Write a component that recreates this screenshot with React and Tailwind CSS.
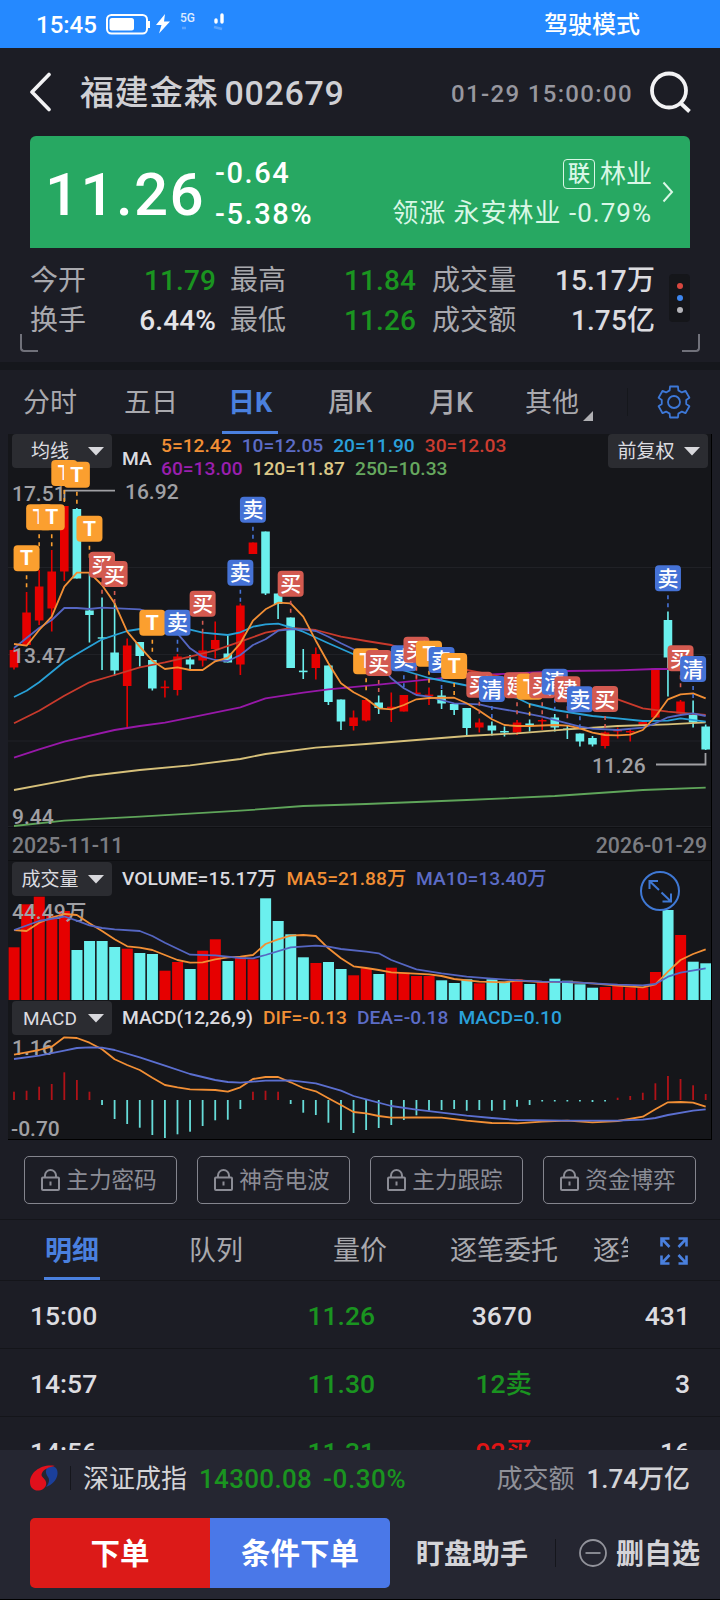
import React from 'react'

const UP = '#e60000'
const DOWN = '#6bf0ee'

const STEP = 12.576
const barX = (i) => 14 + i * STEP

// wick top, body top, body bottom, wick bottom, rising
const candles = [
  [648, 650, 667.5, 669.5, 1], [592, 612.5, 645, 645, 1], [570, 586.5, 620.5, 625, 1], [550, 571.5, 608.5, 631.5, 1],
  [506, 506, 571.5, 581, 1], [508, 509, 578.5, 578.5, 0], [573, 610.5, 615, 642.5, 0], [597.5, 637.3, 638.7, 670, 0],
  [603, 652.5, 670.5, 675.5, 0], [638.5, 645.5, 686, 727.5, 1], [642, 642, 656, 666.5, 0], [660, 660, 688.5, 690.5, 0],
  [680.5, 686.6, 688.2, 697.5, 1], [654, 656.5, 690, 695.5, 1], [655, 659.5, 664.5, 669.5, 0], [633, 650.5, 660.5, 666.5, 1],
  [621.5, 640, 649, 658.5, 1], [636, 653.5, 662.5, 662.5, 0], [603.5, 605.5, 664.5, 675, 1], [542.5, 542.5, 554, 554, 1],
  [531.5, 531.5, 593.5, 595, 0], [593.5, 593.5, 604, 619, 0], [617.5, 617.5, 668, 668, 0], [649, 670.6, 672.2, 679, 0],
  [647.5, 654, 668, 679.5, 1], [665.5, 665.5, 702, 705, 0], [699.5, 699.5, 721.5, 730, 0], [710.5, 717.5, 726, 730.5, 1],
  [698, 700, 720.5, 721.5, 1], [695.5, 702.5, 708, 714, 0], [692.5, 706.7, 708.3, 722, 1], [695, 695, 711.5, 711.5, 1],
  [675, 692.6, 694.2, 695, 1], [687.5, 694.6, 696.2, 705, 1], [690, 695.5, 703.5, 709, 0], [704, 704, 710, 715, 0],
  [708, 708, 728, 735, 0], [718.5, 722.5, 727.5, 732.5, 1], [721.5, 725.5, 730.5, 735.5, 0], [726.5, 731, 732.5, 736.5, 0],
  [720, 722.5, 732.5, 735, 1], [719.5, 723.5, 725, 731.5, 0], [718.5, 720, 721.5, 730, 1], [714, 717.5, 727.5, 731.5, 0],
  [725, 728.5, 730, 739, 0], [733.5, 733.5, 741.5, 746.5, 0], [736, 738, 744.5, 746.5, 0], [731.5, 732.5, 746, 748.5, 1],
  [727.5, 729.5, 731.5, 738.5, 1], [728.5, 731, 732.5, 741.5, 1], [722, 722, 726, 726, 1], [668.5, 668.5, 717.5, 717.5, 1],
  [611.5, 620, 657.5, 696.5, 0], [700, 701.5, 713.5, 713.5, 1], [700.5, 715, 722.5, 727.5, 0], [724.5, 726.5, 749.5, 750, 0],
]

// every line is a list of [bar index, y]
const maLines = [
  { color: '#5fa55a', pts: [[0, 826], [4, 820.7], [10, 816.7], [18, 810.7], [23, 806], [28, 804], [36, 800], [43, 796], [50, 790], [55, 787.7]] },
  { color: '#d6c07a', pts: [[0, 790], [4, 780.7], [6, 776], [10, 770], [14, 765.3], [18, 759], [20, 754], [24, 747.7], [28, 744], [32, 740], [36, 736], [40, 733.3], [44, 729.3], [48, 726], [52, 724.3], [55, 722.3]] },
  { color: '#9718a8', pts: [[0, 757.7], [2, 749.3], [4, 741.7], [8, 730], [10, 726], [12, 722.7], [14, 717.7], [18, 707.3], [20, 698.3], [23, 692.7], [25, 689.3], [29, 684.7], [33, 679.3], [37, 675], [44, 671], [48, 670.3], [51, 669], [55, 669]] },
  { color: '#c93a2c', pts: [[0, 723.3], [2, 710.7], [4, 695.7], [6, 682.3], [8, 675], [10, 667.3], [12, 662.3], [14, 656.7], [16, 650.3], [18, 641.7], [20, 632.7], [22, 628], [24, 630], [26, 636.7], [28, 641], [30, 645], [34, 660], [36, 670], [38, 675], [44, 690], [48, 699.3], [50, 708.3], [52, 711.7], [55, 715]] },
  { color: '#28a0d6', pts: [[0, 697], [1, 690.7], [2, 682.3], [4, 661.7], [5, 654], [7, 639.3], [9, 631], [10, 629], [14, 629.7], [15, 632.7], [17, 635], [18, 632.3], [19, 626.7], [20, 624.3], [21, 623.7], [22, 627.3], [23, 631.7], [25, 643.3], [27, 654.3], [29, 663], [33, 678], [37, 688], [40, 698], [41, 704], [43, 710], [46, 716], [48, 718.3], [50, 721], [52, 720.7], [53, 718.3], [55, 721.7]] },
  { color: '#5566c2', pts: [[0, 648.3], [1, 638], [2, 628], [3, 620], [4, 608], [5, 608], [6, 609], [7, 607.7], [10, 609.3], [12, 617], [13, 633.3], [14, 648.3], [15, 656.7], [16, 660], [17, 661], [18, 655], [19, 645], [20, 639.3], [21, 630.7], [22, 629.3], [23, 629.3], [24, 631], [25, 636.7], [26, 643.3], [27, 649.3], [29, 663], [30, 678.3], [31, 688.3], [32, 695], [33, 696.7], [34, 700], [35, 703.3], [37, 704.3], [38, 707.3], [40, 711.7], [42, 716.7], [44, 723.3], [45, 726.7], [46, 728.7], [48, 730], [50, 727.7], [51, 723.3], [52, 717.3], [53, 715], [54, 713.3], [55, 716]] },
  { color: '#f28f35', pts: [[0, 644], [1, 645.7], [2, 630], [3, 616.7], [4, 586.7], [5, 572.7], [6, 572.7], [7, 585], [8, 603.3], [9, 631.7], [10, 646.7], [11, 660.7], [12, 669], [13, 667.3], [14, 670], [15, 670], [16, 661.3], [17, 657.7], [18, 643.3], [19, 620.7], [20, 609.3], [21, 602.7], [22, 603.3], [23, 616.7], [24, 640.7], [25, 663.3], [26, 683.3], [27, 692.3], [28, 698.7], [29, 708.3], [30, 709.3], [31, 705], [32, 699.3], [33, 698], [35, 697.7], [36, 703.3], [37, 710.7], [38, 719.3], [39, 725], [40, 726], [41, 726], [43, 725], [44, 725.7], [45, 728.3], [46, 732.7], [47, 735], [48, 735.3], [49, 734.7], [50, 730], [51, 716.7], [52, 699.3], [53, 694.3], [54, 693.3], [55, 698.3]] },
]

// bar index, center y, label
const marks = [
  [1, 558.3, 'T'], [2, 517.3, 'T'], [3, 517.3, 'T'], [4, 473, 'T'], [5, 474.7, 'T'], [6, 528.7, 'T'],
  [7, 564.7, '买'], [8, 574, '买'], [11, 622.7, 'T'], [13, 622.7, '卖'], [15, 603.7, '买'], [18, 572.7, '卖'],
  [19, 509.7, '卖'], [22, 583.7, '买'], [28, 661.3, 'T'], [29, 663, '买'], [31, 658.3, '卖'], [32, 649.7, '买'],
  [33, 653.7, 'T'], [34, 660, '卖'], [35, 666, 'T'], [37, 684.7, '买'], [38, 689, '清'], [40, 685.3, '建'],
  [41, 686.7, 'T'], [42, 685.3, '买'], [43, 681.7, '清'], [44, 689.3, '建'], [45, 699.3, '卖'], [47, 699, '买'],
  [52, 578.3, '卖'], [53, 658.3, '买'], [54, 669, '清'],
]

const markColor = { T: '#fb9f2f', 买: '#d35a50', 建: '#d35a50', 卖: '#4572d6', 清: '#4572d6' }

// volume: [top, rising]
const volumes = [
  [947.3, 1], [904.3, 1], [896.7, 1], [915.7, 1], [911, 1], [950, 0], [941, 0], [941, 0], [947, 0], [948.7, 1],
  [953, 0], [954, 0], [970.7, 1], [962, 1], [969, 0], [950.7, 1], [939.3, 1], [961, 0], [957.3, 1], [959.3, 1],
  [898.3, 0], [921, 0], [934.3, 0], [957.3, 0], [963, 1], [962, 0], [969, 0], [975.3, 1], [968.3, 1], [974, 0],
  [967.7, 1], [972.7, 1], [976, 1], [976, 1], [980.3, 0], [983, 0], [979.3, 0], [983.3, 1], [979.3, 0], [981.7, 0],
  [979.3, 1], [984, 0], [982.3, 1], [978.7, 0], [980.7, 0], [984.3, 0], [987.7, 0], [987, 1], [986, 1], [987.3, 1],
  [987.3, 1], [972, 1], [910, 0], [935, 1], [961.7, 0], [963.3, 0],
]

const volLines = [
  { color: '#f28f35', pts: [[0, 930], [1, 931], [2, 922.7], [3, 917.7], [4, 914], [5, 915], [6, 923.3], [7, 931], [8, 939.3], [9, 946.3], [10, 947.7], [11, 950], [12, 955], [13, 960], [14, 962.7], [15, 962.3], [16, 959.3], [17, 957.3], [18, 956.7], [19, 955], [20, 944], [21, 939.3], [22, 935.7], [23, 935], [24, 936], [25, 948.3], [26, 958.3], [27, 966.3], [28, 968], [29, 970], [30, 972.3], [33, 974.3], [34, 976], [35, 979], [37, 981.7], [39, 982.3], [40, 980.5], [42, 982], [44, 982], [46, 983.3], [48, 985.7], [50, 987.3], [51, 984.3], [52, 971.7], [53, 960], [54, 954], [55, 949.3]] },
  { color: '#5566c2', pts: [[0, 930], [2, 921], [4, 916.5], [5, 920.7], [6, 925.3], [7, 928], [8, 929.3], [10, 931], [11, 936], [12, 942.7], [14, 954.7], [16, 955.3], [18, 958], [19, 958.3], [20, 955], [22, 947.3], [24, 945.7], [25, 946.7], [26, 949], [28, 951.7], [29, 953.3], [30, 960], [32, 969.3], [34, 973.3], [36, 976.7], [38, 978.7], [40, 980.3], [42, 981.7], [44, 982], [46, 983.3], [48, 984.7], [50, 985.3], [51, 984], [52, 976.7], [53, 972.7], [55, 968.3]] },
]

const macdBars = [
  1091.7, 1090.7, 1086.7, 1084, 1072.3, 1080, 1091.7, 1105, 1119, 1124, 1127.7, 1135, 1138, 1134.3, 1131.7, 1126,
  1120.3, 1119.7, 1109, 1091.7, 1090.7, 1091.7, 1104, 1112.7, 1115, 1122.7, 1130, 1133, 1130, 1128, 1125, 1120,
  1115.3, 1110.7, 1110, 1109, 1110.7, 1110, 1110.7, 1110, 1106.7, 1105, 1101.5, 1101.5, 1101.5, 1101.5, 1102, 1101.5,
  1097.7, 1096, 1092.7, 1083.3, 1076, 1079, 1085.3, 1094,
]

const macdLines = [
  { color: '#f28f35', pts: [[0, 1054.7], [1, 1052.3], [2, 1050], [3, 1046.7], [4, 1037.3], [5, 1038], [6, 1042.7], [7, 1049.3], [8, 1059.3], [9, 1065], [10, 1070], [11, 1077.7], [12, 1085], [13, 1087.3], [14, 1089.3], [16, 1090], [17, 1091.7], [18, 1087.3], [19, 1079], [20, 1077], [21, 1077], [22, 1082.3], [23, 1088], [24, 1091.3], [25, 1098.3], [26, 1105], [27, 1112], [28, 1113.3], [29, 1116], [30, 1117.7], [32, 1117.3], [34, 1117.7], [36, 1120.7], [38, 1123], [40, 1123.3], [42, 1121.7], [44, 1120.7], [46, 1122.3], [48, 1121], [50, 1116.7], [51, 1109.3], [52, 1102.3], [53, 1102], [54, 1102.7], [55, 1106.7]] },
  { color: '#5b6fd0', pts: [[0, 1059], [2, 1055.7], [4, 1050.7], [5, 1048], [6, 1047.3], [7, 1047.7], [8, 1050], [10, 1057.3], [12, 1065.7], [14, 1074], [16, 1080], [17, 1082], [18, 1082.7], [20, 1080.7], [22, 1080.3], [24, 1083.3], [26, 1090.7], [27, 1096], [28, 1099.3], [30, 1106], [32, 1109.7], [34, 1112.7], [36, 1115.7], [38, 1118], [40, 1120], [44, 1120.7], [48, 1120.7], [50, 1119.7], [51, 1118], [52, 1115], [54, 1110.7], [55, 1109.3]] },
]

function Lines({ data }) {
  return data.map((l) => (
    <polyline
      key={l.color}
      points={l.pts.map(([i, y]) => `${barX(i)},${y}`).join(' ')}
      fill="none"
      stroke={l.color}
      strokeWidth="1.8"
      strokeLinejoin="round"
    />
  ))
}

function Select({ label }) {
  return (
    <div className="flex h-[34px] w-[100px] items-center justify-between rounded bg-[#2b2c31] pr-2 text-[19px] font-normal text-[#dcdce0]">
      <span className="flex-1 pt-px text-center">{label}</span>
      <svg width="16" height="9" viewBox="0 0 16 9" className="shrink-0">
        <path d="M0 0H16L8 8.5Z" fill="#d8d8dc" />
      </svg>
    </div>
  )
}

function StatusBar() {
  return (
    <div className="flex h-12 items-center bg-[#2589ff] pl-[36px] text-[24px] font-medium text-white">
      <span className="w-[70px] pt-[2px]">15:45</span>
      <svg width="120" height="48" viewBox="106 0 120 48">
        <rect x="107" y="15" width="40" height="18.5" rx="4.5" fill="none" stroke="#fff" strokeWidth="2" />
        <rect x="109.5" y="18" width="24.5" height="12.5" rx="2.5" fill="#fff" />
        <path d="M149 21v7" stroke="#fff" strokeWidth="2" />
        <path d="M165 14L156 25h5.5L159 33.5l11-12h-6z" fill="#fff" />
        <text x="180" y="21.500" fontSize="12" fill="#dcebff">5G</text>
        <path d="M216 20v2M222 15v7" stroke="#fff" strokeWidth="3.4" strokeLinecap="round" />
        <path d="M182 28h4M214 27l8 2" stroke="#8fc0ff" strokeWidth="2.5" opacity="0.5" />
      </svg>
      <span className="ml-auto mr-[80px] pt-px text-[24px]">驾驶模式</span>
    </div>
  )
}

function Header() {
  return (
    <div className="flex h-[88px] items-center pl-7 pr-[28px]">
      <svg width="24" height="40" viewBox="0 0 24 40" fill="none" stroke="#f2f2f4" strokeWidth="3.6">
        <path d="M21 2.500L4 20L21 37.500" strokeLinecap="round" strokeLinejoin="round" />
      </svg>
      <h1 className="ml-[28px] flex items-center gap-[6px] pt-[2px] text-[34px] text-[#d0d0d4]">
        <span className="tracking-[0.6px]">福建金森</span>
        <span className="tracking-[0.7px]">002679</span>
      </h1>
      <span className="ml-auto pt-[3px] text-[24px] tracking-[1.35px] text-[#97979f]">01-29 15:00:00</span>
      <svg width="44" height="44" viewBox="0 0 44 44" className="ml-[15px]" fill="none" stroke="#f2f2f4" strokeWidth="3.8">
        <circle cx="21" cy="20.500" r="17" />
        <path d="M32.500 33L41.500 41.500" />
      </svg>
    </div>
  )
}

function PriceCard() {
  return (
    <div className="mx-[30px] flex h-[112px] items-center rounded-t-md bg-[#27a862] pl-[15px] pr-4 text-white">
      <span className="mt-[5px] w-[170px] text-[60px] tracking-[1.4px]">11.26</span>
      <div className="flex flex-col gap-3 pt-[3px] text-[29px] tracking-[1.6px]">
        <span>-0.64</span>
        <span>-5.38%</span>
      </div>
      <div className="ml-auto flex flex-col items-end gap-[11px] text-[26px] text-[#d9f7e6]">
        <div className="flex items-center gap-[5px]">
          <span className="flex h-[30px] w-8 items-center justify-center rounded border border-[#d9f7e6] text-[22px]">联</span>
          <span className="font-normal">林业</span>
        </div>
        <span className="font-normal tracking-[1px]">领涨 永安林业 -0.79%</span>
      </div>
      <svg width="12" height="22" viewBox="0 0 12 22" className="ml-[10px]" fill="none" stroke="#d9f7e6" strokeWidth="2">
        <path d="M1.500 1.500L10 11L1.500 20.500" />
      </svg>
    </div>
  )
}

const stats = [
  ['今开', '11.79', '最高', '11.84', '成交量', '15.17万'],
  ['换手', '6.44%', '最低', '11.26', '成交额', '1.75亿'],
]

function Stats() {
  return (
    <div className="flex h-[114px] flex-col">
      <div className="flex pl-[30px] pt-[13px]">
        <div className="flex w-[625px] flex-col text-[28px] tracking-[0.1px]">
          {stats.map((r, i) => (
            <div key={r[0]} className="flex h-10 items-center text-[#a9a9ae]">
              <span className="w-[70px] font-normal">{r[0]}</span>
              <span className={i === 0 ? 'w-[116px] text-right text-[#1a9420]' : 'w-[116px] text-right text-[#e4e4e8]'}>{r[1]}</span>
              <span className="ml-[14px] w-[80px] font-normal">{r[2]}</span>
              <span className="w-[106px] text-right text-[#1a9420]">{r[3]}</span>
              <span className="ml-[16px] w-[100px] font-normal">{r[4]}</span>
              <span className="flex-1 text-right text-[#dcdce0]">{r[5]}</span>
            </div>
          ))}
        </div>
        <div className="ml-[14px] mt-[13px] flex h-12 w-[21px] flex-col items-center justify-center gap-[6px] rounded-sm bg-[#15161a]">
          <i className="size-[6px] rounded-full bg-[#d8473f]" />
          <i className="size-[6px] rounded-full bg-[#3d86ee]" />
          <i className="size-[6px] rounded-full bg-[#b4b4b8]" />
        </div>
      </div>
      <div className="-mt-[7px] flex justify-between px-5">
        <span className="h-[18px] w-[18px] rounded-bl border-b-2 border-l-2 border-[#70717a]" />
        <span className="h-[18px] w-[18px] rounded-br border-b-2 border-r-2 border-[#70717a]" />
      </div>
    </div>
  )
}

// six-toothed outline around (17, 17)
function gearPath() {
  const pts = []
  for (let i = 0; i < 6; i++) {
    const base = (i * Math.PI) / 3 - Math.PI / 2
    ;[[-0.36, 12.4], [-0.25, 16], [0.25, 16], [0.36, 12.4]].forEach(([d, r]) => {
      pts.push(`${(17 + r * Math.cos(base + d)).toFixed(2)},${(17 + r * Math.sin(base + d)).toFixed(2)}`)
    })
  }
  return `M${pts.join('L')}Z`
}

function PeriodTabs() {
  return (
    <div className="box-content flex h-[64px] items-center border-t-8 border-[#15171c] pl-[23px] text-[27px] font-normal text-[#a9a9ae]">
      <span className="w-[101px] pt-[2px]">分时</span>
      <span className="w-[98px] pt-[2px]">五日</span>
      <span className="flex h-full w-[56px] items-center justify-center border-b-[3px] border-[#4a80de] pt-[5px] font-bold text-[#4a80de]">日K</span>
      <span className="ml-[50px] w-[101px] pt-[2px] font-medium">周K</span>
      <span className="w-[96px] pt-[2px] font-medium">月K</span>
      <span className="pt-[2px]">其他</span>
      <svg width="10" height="10" viewBox="0 0 10 10" className="ml-[4px] mt-7">
        <path d="M10 0V10H0Z" fill="#b0b0b4" />
      </svg>
      <span className="ml-[34px] h-7 w-px bg-[#15171c]" />
      <svg width="34" height="34" viewBox="0 0 34 34" className="ml-[29px]" fill="none" stroke="#3d78d8" strokeWidth="1.8" strokeLinejoin="round">
        <path d={gearPath()} />
        <circle cx="17" cy="17" r="6" />
      </svg>
    </div>
  )
}

function PriceChart() {
  return (
    <div className="grid">
      <div className="col-start-1 row-start-1 flex items-start pl-1 pr-[3px] text-[19.200px]">
        <Select label="均线" />
        <span className="ml-[10px] mt-[15px] w-[39px] text-[#dcdce0]">MA</span>
        <div className="mt-[2px] flex flex-col gap-[4px]">
          <div className="flex gap-[10px]">
            <span className="text-[#f28f35]">5=12.42</span>
            <span className="text-[#5c6cc6]">10=12.05</span>
            <span className="text-[#2aa0da]">20=11.90</span>
            <span className="text-[#cc3c30]">30=12.03</span>
          </div>
          <div className="flex gap-[10px]">
            <span className="text-[#9a1fae]">60=13.00</span>
            <span className="text-[#dcc888]">120=11.87</span>
            <span className="text-[#66a85f]">250=10.33</span>
          </div>
        </div>
        <div className="ml-auto">
          <Select label="前复权" />
        </div>
      </div>
      <svg className="col-start-1 row-start-1" width="703" height="393" viewBox="8 434 703 393">
        <path d="M8 567.500H711M8 654.500H711M8 741H711M8 826.500H711" stroke="#202126" />
        {candles.map(([h, t, b, l, up], i) => (
          <g key={i} fill={up ? UP : DOWN}>
            <rect x={barX(i) - 0.8} y={h} width="1.6" height={l - h} />
            <rect x={barX(i) - 4.3} y={t} width="8.6" height={b - t} />
          </g>
        ))}
        <Lines data={maLines} />
        <g fill="#a0a0a4" fontSize="21">
          <text x="12" y="500.500">17.51</text>
          <text x="12" y="662.500">13.47</text>
          <text x="12" y="823.500">9.44</text>
          <text x="125" y="498.500">16.92</text>
          <text x="592" y="772.500">11.26</text>
        </g>
        <path d="M64.500 501V490.700H115M656 764.500H705.500V753" fill="none" stroke="#a0a0a4" strokeWidth="1.8" />
        {marks.map(([i, y, label]) => (
          <g key={i}>
            <path d={`M${barX(i)} ${y + 17}v13`} stroke={markColor[label]} strokeWidth="1.6" strokeDasharray="4 4" />
            <rect x={barX(i) - 13} y={y - 13} width="26" height="26" rx="4" fill={markColor[label]} />
            <text x={barX(i)} y={y + (label === 'T' ? 7 : 7.5)} textAnchor="middle" fontSize={label === 'T' ? 21 : 21} fontWeight={label === 'T' ? 700 : 500} fill="#fff">
              {label}
            </text>
          </g>
        ))}
      </svg>
    </div>
  )
}

function VolumeChart() {
  return (
    <div className="grid">
      <div className="col-start-1 row-start-1 flex h-[34px] items-center gap-[10px] pl-1 text-[19.200px]">
        <Select label="成交量" />
        <span className="text-[#dcdce0]">VOLUME=15.17万</span>
        <span className="text-[#f28f35]">MA5=21.88万</span>
        <span className="text-[#5c6cc6]">MA10=13.40万</span>
      </div>
      <svg className="col-start-1 row-start-1" width="703" height="138" viewBox="8 862 703 138">
        {volumes.map(([y, up], i) => (
          <rect key={i} x={barX(i) - 5.4} y={y} width="11" height={1000 - y} fill={up ? UP : DOWN} />
        ))}
        <text x="12" y="918.500" fontSize="21" fill="#a0a0a4">44.49万</text>
        <Lines data={volLines} />
        <g fill="none" stroke="#3f78d4" strokeWidth="2">
          <circle cx="660" cy="891" r="19" />
          <path d="M659 890L649.500 881M649.500 889V881H658M661.500 892.500L671 901.500M662.500 901.500H671V893.500" />
        </g>
      </svg>
    </div>
  )
}

function MacdChart() {
  return (
    <div className="grid">
      <div className="col-start-1 row-start-1 flex h-[34px] items-center gap-[10px] pl-1 text-[19.200px]">
        <Select label="MACD" />
        <span className="text-[#dcdce0]">MACD(12,26,9)</span>
        <span className="text-[#f28f35]">DIF=-0.13</span>
        <span className="text-[#5c6cc6]">DEA=-0.18</span>
        <span className="text-[#2aa0da]">MACD=0.10</span>
      </div>
      <svg className="col-start-1 row-start-1" width="703" height="138" viewBox="8 1001 703 138">
        {macdBars.map((y, i) => (
          <rect key={i} x={barX(i) - 0.9} y={Math.min(y, 1100)} width="1.8" height={Math.abs(y - 1100)} fill={y < 1100 ? '#b01218' : '#66dcd8'} />
        ))}
        <g fontSize="21" fill="#a0a0a4">
          <text x="12" y="1054.500">1.16</text>
          <text x="11" y="1135.500">-0.70</text>
        </g>
        <Lines data={macdLines} />
      </svg>
    </div>
  )
}

function Charts() {
  return (
    <div className="ml-2 w-[704px] border-r border-b border-black bg-[#15161a]">
      <PriceChart />
      <div className="flex h-[34px] items-center justify-between border-y border-[#0e0f12] px-1 pt-[3px] text-[21.300px] text-[#7c7d82]">
        <span>2025-11-11</span>
        <span>2026-01-29</span>
      </div>
      <div className="flex flex-col gap-px pt-px">
        <VolumeChart />
        <MacdChart />
      </div>
    </div>
  )
}

function LockButtons() {
  return (
    <div className="flex h-[80px] gap-5 border-b border-[#14151a] px-6 pt-4">
      {['主力密码', '神奇电波', '主力跟踪', '资金博弈'].map((name) => (
        <button key={name} type="button" className="flex h-12 w-[153px] items-center justify-center gap-[6px] rounded-[5px] border border-[#84858e] pr-[3px] text-[22.600px] font-normal text-[#8b8c95]">
          <svg width="19" height="22" viewBox="0 0 19 22" fill="none" stroke="#8b8c95" strokeWidth="2">
            <rect x="1" y="8.500" width="17" height="12.500" rx="1" />
            <path d="M4 8.500V6.500a5.500 5.500 0 0 1 11 0V8.500M9.500 12.500v4" />
          </svg>
          <span className="pt-[3px]">{name}</span>
        </button>
      ))}
    </div>
  )
}

const trades = [
  ['15:00', '11.26', '3670', '431', 'text-[#dcdce0]'],
  ['14:57', '11.30', '12卖', '3', 'text-[#1a9420]'],
  ['14:56', '11.31', '92买', '16', 'text-[#e01515]'],
]

function Trades() {
  return (
    <div className="h-[230px] overflow-hidden">
      <div className="flex h-[61px] items-center border-b border-[#14151a] pl-11 text-[27px] font-normal text-[#a9a9ae]">
        <span className="flex h-full w-14 items-center justify-center border-b-[3px] border-[#4a80de] pt-[5px] font-bold text-[#4a80de]">明细</span>
        <span className="ml-[89px] w-[144px] pt-[3px]">队列</span>
        <span className="w-[117px] pt-[3px]">量价</span>
        <span className="w-[143px] pt-[3px]">逐笔委托</span>
        <span className="w-[35px] overflow-hidden whitespace-nowrap pt-[3px]">逐笔</span>
        <svg width="28" height="28" viewBox="0 0 28 28" className="ml-[32px] mt-px" fill="none" stroke="#4a80de" strokeWidth="2.6">
          <path d="M1.500 9.500V1.500H9.500M1.500 1.500L9.500 10M18.500 1.500H26.500V9.500M26.500 1.500L18.500 10M1.500 18.500V26.500H9.500M1.500 26.500L9.500 18M26.500 18.500V26.500H18.500M26.500 26.500L18.500 18" />
        </svg>
      </div>
      {trades.map(([time, price, vol, count, color]) => (
        <div key={time} className="flex h-[68px] items-center border-b border-[#14151a] pl-[30px] pr-[30px] pt-[4px] text-[26.500px] text-[#dcdce0]">
          <span className="w-[144px]">{time}</span>
          <span className="w-[201px] text-right text-[#1a9420]">{price}</span>
          <span className={`w-[157px] text-right ${color}`}>{vol}</span>
          <span className="flex-1 text-right">{count}</span>
        </div>
      ))}
    </div>
  )
}

function Footer() {
  return (
    <div className="h-[150px] border-b border-black bg-[#252631]">
      <div className="flex h-[56px] items-center pl-[30px] pr-[30px] text-[26px] text-[#d4d4d8]">
        <svg width="28" height="26" viewBox="0 0 28 26">
          <path d="M17 3C24 -0.500 28 3 27.500 9C27 15 22 20 16 22C19 18 20 15 18 12C16 9 15 6 17 3Z" fill="#1b3f9a" />
          <path d="M25 1C12 -1.500 0 7 0 17C0 23 4 26 9 25.500C14 25 17 21 16 17C15 13 10 12 12 8C14 4 19 2 25 1Z" fill="#e0101c" />
        </svg>
        <span className="ml-3 h-6 w-px bg-[#15161c]" />
        <span className="ml-[12px] pt-px font-normal">深证成指</span>
        <span className="ml-[12px] pt-px tracking-[0.3px] text-[#1a9420]">14300.08</span>
        <span className="ml-[11px] pt-px tracking-[0.6px] text-[#1a9420]">-0.30%</span>
        <span className="ml-auto pt-px font-normal text-[#8f9098]">成交额</span>
        <span className="ml-[12px] pt-px">1.74万亿</span>
      </div>
      <div className="flex pl-[30px] pt-3 text-[28px]">
        <div className="flex h-[70px] overflow-hidden rounded-[5px] text-[29.500px] font-bold text-white">
          <button type="button" className="w-[180px] bg-[#dc1a18] pt-[3px]">下单</button>
          <button type="button" className="w-[180px] bg-[#4a78e8] pt-[3px]">条件下单</button>
        </div>
        <div className="flex flex-1 items-center font-bold text-[#d4d4d8]">
          <span className="ml-[26px] pt-[3px]">盯盘助手</span>
          <span className="ml-[27px] h-7 w-px bg-[#15161c]" />
          <svg width="28" height="28" viewBox="0 0 28 28" className="ml-[23px]" fill="none" stroke="#92939b" strokeWidth="1.8">
            <circle cx="14" cy="14" r="13" />
            <path d="M6.500 14H21.500" />
          </svg>
          <span className="ml-[9px] pt-[3px]">删自选</span>
        </div>
      </div>
    </div>
  )
}

export default function App() {
  return (
    <div className="h-[1600px] w-[720px] overflow-hidden bg-[#1c1d25] font-['Roboto','Noto_Sans_CJK_SC',sans-serif] font-medium leading-none">
      <StatusBar />
      <Header />
      <PriceCard />
      <Stats />
      <PeriodTabs />
      <Charts />
      <LockButtons />
      <Trades />
      <Footer />
    </div>
  )
}
